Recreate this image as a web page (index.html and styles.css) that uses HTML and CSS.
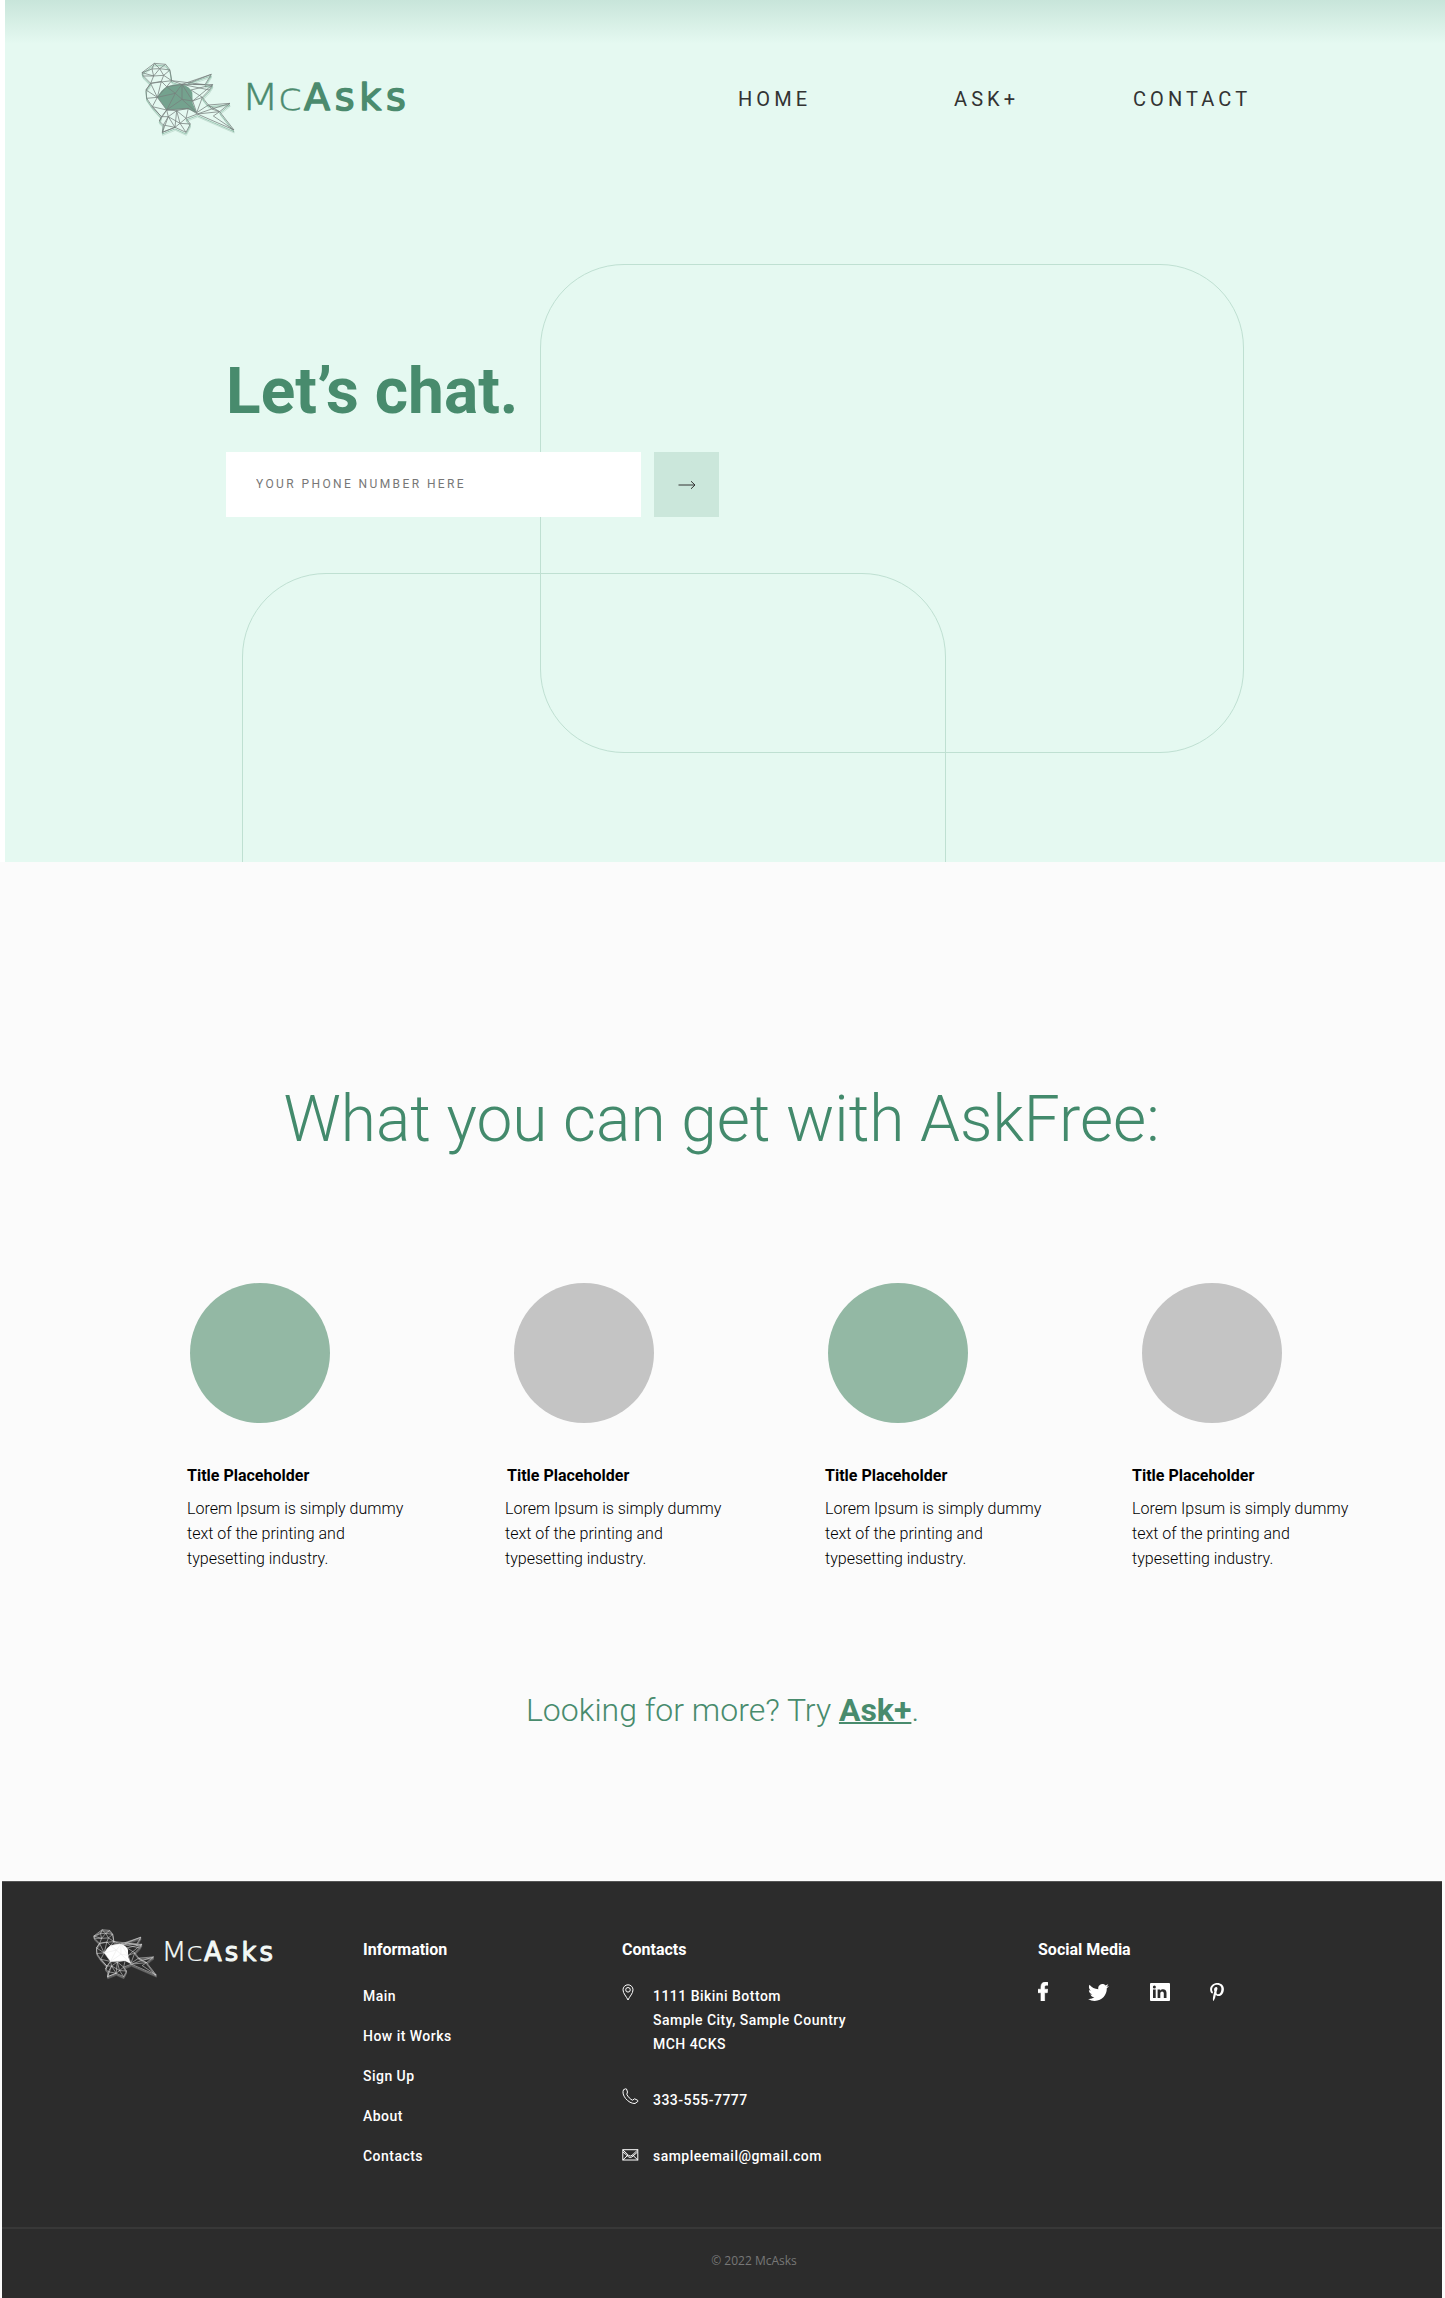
FILE: index.html
```html
<!DOCTYPE html>
<html lang="en">
<head>
<meta charset="utf-8">
<title>McAsks</title>
<link rel="stylesheet" href="styles.css">
</head>
<body>
<svg class="defs" width="0" height="0" aria-hidden="true">
  <defs>
    <path id="bird-edge" d="M66 98L103 70L137 73L150 90L155 122L186 133L274 103L255 134L278 134L268 150L247 172L265 195L330 190L299 215L342 270L232 222L198 235L211 252L198 277L165 262L127 277L130 255L118 243L124 230L97 200L80 175L78 150L92 130L70 108Z"/>
    <path id="bird-mesh" d="M66 98L96 87L103 70L119 86L137 73M96 87L119 86L150 90L131 106L119 86L101 108L96 87M66 98L101 108L131 106L155 122L92 130L101 108L70 108M92 130L124 124L131 106M78 150L92 130L112 172L78 150M80 175L112 172L124 124L140 140L112 172M155 122L140 140L186 133L255 134L155 122M205 130L274 103M220 133L255 134M186 133L166 160L112 172L97 200L140 210L112 172M166 160L140 140M166 160L186 178L186 133M186 178L140 210L166 160M186 178L218 183L230 218L186 178M186 133L218 183L278 134L213 150M218 183L247 172L213 150M247 172L230 218L265 195L299 215L232 222M186 133L268 150M265 195L275 207L330 190M275 207L299 215L280 228L342 270M275 207L232 222M97 200L124 230L140 210L118 243M124 230L145 230L140 210L170 212L145 230L130 255L165 262L145 230L180 250L170 212L198 235L180 250L198 277M165 262L180 250L211 252M127 277L145 230M165 262L170 212L205 205L198 235M205 205L232 222M140 210L205 205M127 277L165 262"/>
    <path id="bird-core" d="M112 172Q122 150 140 140Q163 131 186 133Q210 140 217 158L218 190L230 219L205 208L140 210Z"/>
    <symbol id="logo" viewBox="138 58 272 82">
      <g transform="translate(120 40) scale(.33333)" fill="none" stroke-linejoin="round">
        <use href="#bird-edge" class="echo-far" x="1" y="9"/>
        <use href="#bird-edge" class="echo-near" x="0" y="5"/>
        <use href="#bird-core" class="core"/>
        <use href="#bird-edge" class="wire"/>
        <use href="#bird-mesh" class="wire"/>
      </g>
      <text class="word-light" transform="translate(241.100 110) scale(1.170 1)">Mc</text>
      <text class="word-bold" x="304" y="109.5">Asks</text>
    </symbol>
  </defs>
</svg>

<section class="hero">
  <div class="outline outline-top"></div>
  <div class="outline outline-bottom"></div>
  <header class="header">
    <svg class="logo logo-header" role="img" aria-label="McAsks"><use href="#logo"/></svg>
    <nav class="nav">
      <a>HOME</a>
      <a>ASK+</a>
      <a>CONTACT</a>
    </nav>
  </header>
  <div class="chat">
    <h1>Let’s chat.</h1>
    <form class="phone">
      <input type="text" placeholder="YOUR PHONE NUMBER HERE">
      <button type="button" aria-label="Send">
        <svg width="18" height="10" viewBox="0 0 18 10" fill="none" stroke="#333" stroke-width="1"><path d="M.5 5H17M13 1.2L17 5L13 8.8"/></svg>
      </button>
    </form>
  </div>
</section>

<main class="features">
  <h2>What you can get with AskFree:</h2>
  <div class="cards">
    <article class="card card-1"><i class="disc green"></i><h3>Title Placeholder</h3><p>Lorem Ipsum is simply dummy text of the printing and typesetting industry.</p></article>
    <article class="card card-2"><i class="disc grey"></i><h3>Title Placeholder</h3><p>Lorem Ipsum is simply dummy text of the printing and typesetting industry.</p></article>
    <article class="card card-3"><i class="disc green"></i><h3>Title Placeholder</h3><p>Lorem Ipsum is simply dummy text of the printing and typesetting industry.</p></article>
    <article class="card card-4"><i class="disc grey"></i><h3>Title Placeholder</h3><p>Lorem Ipsum is simply dummy text of the printing and typesetting industry.</p></article>
  </div>
  <p class="more">Looking for more? Try <a>Ask+</a>.</p>
</main>

<footer class="footer">
  <div class="footer-main">
    <svg class="logo logo-footer" role="img" aria-label="McAsks"><use href="#logo"/></svg>
    <section class="info">
      <h4>Information</h4>
      <ul>
        <li>Main</li>
        <li>How it Works</li>
        <li>Sign Up</li>
        <li>About</li>
        <li>Contacts</li>
      </ul>
    </section>
    <section class="contacts">
      <h4>Contacts</h4>
      <div class="contact address">
        <svg width="17" height="17" viewBox="0 0 17 17" fill="none" stroke="#fff" stroke-width="1"><path d="M6 16C4.500 12.500 1 9.500 1 5.800A5 5 0 0 1 11 5.800C11 9.500 7.500 12.500 6 16Z"/><circle cx="6" cy="5.800" r="2.300"/></svg>
        <span>1111 Bikini Bottom<br>Sample City, Sample Country<br>MCH 4CKS</span>
      </div>
      <div class="contact phone-line">
        <svg width="17" height="17" viewBox="0 0 17 17" fill="none" stroke="#fff" stroke-width="1" stroke-linejoin="round"><path d="M3.600 .8L1.500 1.700C.3 4.200 1.200 7.500 3.600 10.500C6.300 13.700 9.500 15.600 13 15.500L15.900 13.400L15.700 12.300L12.600 10.800L10.500 12.200C8.400 11.400 5.800 8.700 4.800 6.300L5.500 4L4.500 1Z"/></svg>
        <span>333-555-7777</span>
      </div>
      <div class="contact email">
        <svg width="17" height="12" viewBox="0 0 17 12" fill="none" stroke="#fff" stroke-width="1"><rect x=".8" y=".7" width="15" height="10.300"/><path d="M1 1L6.500 6.300Q8.300 7.800 10.100 6.300L15.600 1M1 3L6.800 8Q8.300 9 9.800 8L15.600 3M1 10.800L6 6M15.600 10.800L10.600 6"/></svg>
        <span>sampleemail@gmail.com</span>
      </div>
    </section>
    <section class="social">
      <h4>Social Media</h4>
      <div class="social-icons">
        <svg class="facebook" width="10" height="19" viewBox="22.900 0 274.200 512" preserveAspectRatio="none" fill="#fff" stroke="#fff" stroke-width="16"><path d="M279.140 288l14.220-92.660h-88.910v-60.130c0-25.350 12.420-50.060 52.240-50.060h40.420V6.260S260.430 0 225.360 0c-73.220 0-121.080 44.380-121.080 124.720v70.620H22.890V288h81.390v224h100.170V288z"/></svg>
        <svg class="twitter" width="21" height="17" viewBox="0 2.200 24 19.600" fill="#fff"><path d="M23.953 4.570a10 10 0 01-2.825.775 4.958 4.958 0 002.163-2.723c-.951.555-2.005.959-3.127 1.184a4.920 4.920 0 00-8.384 4.482C7.690 8.095 4.067 6.130 1.640 3.162a4.822 4.822 0 00-.666 2.475c0 1.710.870 3.213 2.188 4.096a4.904 4.904 0 01-2.228-.616v.060a4.923 4.923 0 003.946 4.827 4.996 4.996 0 01-2.212.085 4.936 4.936 0 004.604 3.417 9.867 9.867 0 01-6.102 2.105c-.390 0-.779-.023-1.170-.067a13.995 13.995 0 007.557 2.209c9.053 0 13.998-7.496 13.998-13.985 0-.210 0-.420-.015-.630A9.935 9.935 0 0024 4.590z"/></svg>
        <svg class="linkedin" width="20" height="18" viewBox="0 0 20 18"><rect width="20" height="18" rx="1" fill="#fff"/><path fill="#2c2c2c" d="M3 6.500H5.700V15H3ZM7.600 6.500H10.200V7.700C11.600 5.600 16.500 5.500 16.500 9.800V15H13.800V10.600C13.800 7.700 10.300 7.900 10.300 10.600V15H7.600Z"/><circle cx="4.350" cy="4.100" r="1.500" fill="#2c2c2c"/></svg>
        <svg class="pinterest" width="14" height="18" viewBox="0 6 384 500" fill="#fff"><path d="M204 6.500C101.400 6.500 0 74.900 0 185.600 0 256 39.600 296 63.600 296c9.900 0 15.600-27.600 15.600-35.400 0-9.300-23.700-29.100-23.700-67.800 0-80.400 61.200-137.400 140.400-137.400 68.100 0 118.500 38.700 118.500 109.800 0 53.100-21.300 152.700-90.300 152.700-24.900 0-46.200-18-46.200-43.800 0-37.800 26.400-74.400 26.400-113.400 0-66.200-93.900-54.200-93.900 25.800 0 16.800 2.100 35.400 9.600 50.700-13.800 59.400-42 147.900-42 209.100 0 18.900 2.700 37.500 4.500 56.400 3.400 3.800 1.700 3.400 6.900 1.500 50.400-69 48.600-82.500 71.400-172.800 12.300 23.400 44.100 36 69.300 36 106.200 0 153.900-103.500 153.900-196.800C384 71.300 298.200 6.500 204 6.500z"/></svg>
      </div>
    </section>
  </div>
  <div class="copyright">© 2022 McAsks</div>
</footer>
</body>
</html>
```
FILE: styles.css
```css
* { box-sizing: border-box; margin: 0; padding: 0; }
body { width: 1445px; height: 2298px; background: #fbfbfb; font-family: Roboto, "Liberation Sans", sans-serif; color: #000; overflow: hidden; }
.defs { display: block; }
ul { list-style: none; }

/* Hero */
.hero { position: relative; height: 862px; overflow: hidden; border-left: 5px solid #fff; background: linear-gradient(#c8e5da, #e5f9f1 44px); }
.outline { position: absolute; width: 704px; height: 489px; border: 1px solid #bfe0d2; border-radius: 84px; }
.outline-top { left: 535px; top: 264px; }
.outline-bottom { left: 237px; top: 573px; }
.header { position: relative; display: flex; align-items: flex-start; padding: 58px 0 0 133px; }
.logo { display: block; flex: none; }
.logo-header { width: 272px; height: 82px; --wire: #77807d; --near: #76ab93; --far: #b5d3c6; --core: #74a28e; --ink: #4b8b6e; }
.nav { display: flex; padding: 29px 0 0 328px; font-size: 20px; line-height: 24px; letter-spacing: 4.1px; color: #333; }
.nav a:nth-child(1) { width: 216px; }
.nav a:nth-child(2) { width: 179px; }

.wire { stroke: var(--wire); stroke-width: 2.3; }
.echo-near { stroke: var(--near); stroke-width: 2; }
.echo-far { stroke: var(--far); stroke-width: 2; }
.core { fill: var(--core); }
.word-light, .word-bold { font-family: "DejaVu Sans", sans-serif; font-size: 38px; fill: var(--ink); stroke: var(--ink); }
.word-light { font-weight: 200; letter-spacing: -1.3px; stroke-width: .3px; }
.word-bold { letter-spacing: 4.7px; stroke-width: 1.5px; stroke-linejoin: round; }

.chat { position: relative; padding: 214px 0 0 221px; }
h1 { font-size: 64px; line-height: 76px; font-weight: 700; color: #488b6d; }
.phone { display: flex; gap: 13px; margin-top: 22px; }
.phone input { width: 415px; height: 65px; border: 0; padding: 0 30px 1px; background: #fff; font: 12px Roboto, sans-serif; letter-spacing: 2.4px; }
.phone input::placeholder { color: #777; opacity: 1; }
.phone button { width: 65px; height: 65px; border: 0; background: #cbe7db; display: flex; align-items: center; justify-content: center; }

/* Features */
.features { height: 1019px; padding-top: 220px; }
h2 { font-size: 64px; line-height: 76px; font-weight: 300; color: #438a6c; text-align: center; padding-right: 2px; }
.cards { display: flex; padding: 125px 0 0 187px; }
.card { width: 318px; }
.card-2 { width: 320px; }
.card-3 { width: 307px; }
.card-4 { width: 226px; }
.disc { display: block; width: 140px; height: 140px; border-radius: 50%; margin-left: 3px; }
.card-2 .disc { margin-left: 9px; }
.card-4 .disc { margin-left: 10px; }
.green { background: #93b8a4; }
.grey { background: #c4c4c4; }
h3 { margin-top: 43px; font-size: 16px; line-height: 20px; font-weight: 700; }
.card-2 h3 { padding-left: 2px; }
.card p { width: 225px; margin-top: 10px; font-size: 16px; line-height: 25px; font-weight: 300; }
.more { margin-top: 120px; font-size: 32px; line-height: 38px; font-weight: 300; color: #488b6d; text-align: center; }
.more a { font-weight: 700; text-decoration: underline; text-decoration-thickness: 2px; }

/* Footer */
.footer { width: 1440px; height: 417px; margin-left: 2px; background: #2c2c2c; border-top: 1px solid #555; color: #fff; }
.footer-main { display: flex; height: 345px; padding: 44px 0 0 89px; }
.logo-footer { width: 185px; height: 56px; --wire: #e6e6e6; --near: #bbb; --far: #888; --core: #fff; --ink: #f3f8f6; }
h4 { font-size: 16px; line-height: 20px; font-weight: 700; padding-top: 14px; }
.info { width: 259px; margin-left: 87px; }
.info ul, .contact { font-size: 14px; font-weight: 500; letter-spacing: .47px; }
.info ul { padding-top: 24px; }
.info li { line-height: 24px; padding-bottom: 16px; }
.contacts { width: 416px; }
.contact { display: flex; line-height: 24px; }
.contact svg { margin-right: 14px; }
.address { padding-top: 24px; }
.phone-line { padding-top: 32px; }
.email { padding-top: 32px; }
.email svg { margin-top: 5px; }
.social-icons { display: flex; align-items: flex-end; padding-top: 22px; }
.twitter { margin-left: 40px; }
.linkedin { margin-left: 41px; }
.pinterest { margin-left: 40px; }
.copyright { border-top: 2px solid #383838; padding: 23px 0 0 64px; font: 12px/17px "Open Sans", sans-serif; color: #777; text-align: center; }
```
